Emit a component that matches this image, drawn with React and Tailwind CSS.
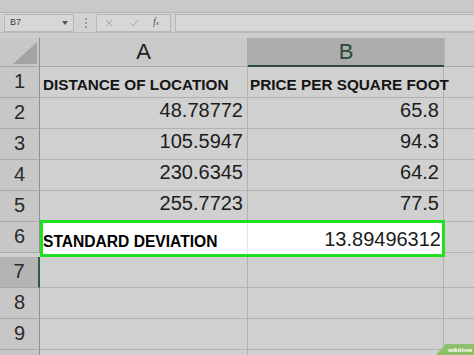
import React from "react";

const rows = [
  { n: "1", a: "DISTANCE OF LOCATION", b: "PRICE PER SQUARE FOOT", head: true },
  { n: "2", a: "48.78772", b: "65.8" },
  { n: "3", a: "105.5947", b: "94.3" },
  { n: "4", a: "230.6345", b: "64.2" },
  { n: "5", a: "255.7723", b: "77.5" },
];

function RowHeader({ n, selected }) {
  return (
    <div
      className={
        "h-[31px] flex items-end justify-center pb-[6px] text-[20px] leading-[20px] text-[#2a2a2a] border-b border-[#a9a9a9] " +
        (selected
          ? "bg-[#b4b4b4] border-r-2 border-r-[#2d5a3d]"
          : "bg-[#c7c7c7] border-r border-r-[#8f8f8f]")
      }
    >
      {n}
    </div>
  );
}

function DataRow({ r }) {
  if (r.head) {
    return (
      <>
        <RowHeader n={r.n} />
        <div className="h-[31px] flex items-end pl-[3px] pb-[5px] text-[15.3px] leading-[15px] font-bold text-[#141414] border-b border-r border-[#b2b2b2] whitespace-nowrap">
          {r.a}
        </div>
        <div className="h-[31px] flex items-end pl-[2px] pb-[5px] text-[15.3px] leading-[15px] font-bold text-[#141414] border-b border-r border-[#b2b2b2] whitespace-nowrap">
          {r.b}
        </div>
        <div className="h-[31px] border-b border-[#b2b2b2]" />
      </>
    );
  }
  return (
    <>
      <RowHeader n={r.n} />
      <div className="h-[31px] flex items-end justify-end pr-[4px] pb-[8px] text-[20px] leading-[20px] text-[#1c1c1c] border-b border-r border-[#b2b2b2]">
        {r.a}
      </div>
      <div className="h-[31px] flex items-end justify-end pr-[4px] pb-[8px] text-[20px] leading-[20px] text-[#1c1c1c] border-b border-r border-[#b2b2b2]">
        {r.b}
      </div>
      <div className="h-[31px] border-b border-[#b2b2b2]" />
    </>
  );
}

function EmptyRow({ n, selected }) {
  return (
    <>
      <RowHeader n={n} selected={selected} />
      <div className="h-[31px] border-b border-r border-[#b2b2b2]" />
      <div className="h-[31px] border-b border-r border-[#b2b2b2]" />
      <div className="h-[31px] border-b border-[#b2b2b2]" />
    </>
  );
}

export default function App() {
  return (
    <div className="relative w-[474px] h-[355px] overflow-hidden bg-[#d0d0d0] font-['Liberation_Sans',Arial,sans-serif]">
      {/* top strip */}
      <div className="h-[13px] bg-[#c9c9c9] border-b border-[#b6b6b6]" />
      {/* formula bar */}
      <div className="h-[20px] flex items-center bg-[#d2d2d2] border-b border-[#b9b9b9]">
        <div className="ml-[4px] w-[70px] h-[18px] flex items-center justify-between px-[5px] bg-[#d7d7d7] border border-[#b8b8b8]">
          <span className="text-[9px] leading-[9px] text-[#3c3c3c]">B7</span>
          <svg width="6" height="4" viewBox="0 0 6 4">
            <path d="M0 0 L6 0 L3 4 Z" fill="#555" />
          </svg>
        </div>
        <div className="ml-[11px] w-[2px] flex flex-col gap-[2px]">
          <span className="block w-[2px] h-[2px] bg-[#9a9a9a]" />
          <span className="block w-[2px] h-[2px] bg-[#9a9a9a]" />
          <span className="block w-[2px] h-[2px] bg-[#9a9a9a]" />
        </div>
        <div className="ml-[9px] w-[75px] h-[18px] flex items-center bg-[#d7d7d7] border border-[#b8b8b8]">
          <svg className="ml-[8px]" width="8" height="8" viewBox="0 0 8 8">
            <path d="M1 1 L7 7 M7 1 L1 7" stroke="#a8a8a8" strokeWidth="1" />
          </svg>
          <svg className="ml-[16px]" width="10" height="8" viewBox="0 0 10 8">
            <path d="M1 4 L4 7 L9 1" stroke="#a8a8a8" strokeWidth="1" fill="none" />
          </svg>
          <span className="ml-[14px] text-[10px] leading-[10px] italic text-[#555] font-['Liberation_Serif',serif]">
            f<span className="text-[7px]">x</span>
          </span>
        </div>
        <div className="ml-[4px] flex-1 h-[18px] bg-[#d7d7d7] border border-r-0 border-[#b8b8b8]" />
      </div>
      <div className="h-[5px] bg-[#cdcdcd]" />

      {/* grid */}
      <div className="grid grid-cols-[40px_208px_196px_1fr]">
        {/* header row */}
        <div className="h-[29px] relative bg-[#c7c7c7] border-r border-[#8f8f8f] border-b border-b-[#a9a9a9]">
          <svg className="absolute left-[13px] top-[4px]" width="24" height="22" viewBox="0 0 24 22">
            <path d="M24 0 L24 22 L0 22 Z" fill="#a3a3a3" />
          </svg>
        </div>
        <div className="h-[29px] flex items-center justify-center bg-[#c9c9c9] border-r border-b border-[#a9a9a9] text-[22px] leading-[22px] text-[#1e1e1e]">
          A
        </div>
        <div className="h-[29px] flex items-center justify-center bg-[#acacac] border-b-2 border-[#2b4a38] text-[22px] leading-[22px] text-[#2b4a38]">
          B
        </div>
        <div className="h-[29px] bg-[#cbcbcb] border-b border-[#a9a9a9] border-l border-l-[#b8b8b8]" />

        {rows.map((r) => (
          <DataRow key={r.n} r={r} />
        ))}

        {/* row 6 */}
        <RowHeader n="6" />
        <div className="col-span-2 h-[31px] -mt-[2px] -mr-[1px] box-content border-[3px] border-[#21e021] bg-white grid grid-cols-[205px_1fr] relative z-10">
          <div className="flex items-end pb-[5px] text-[15.6px] leading-[15px] font-bold text-black whitespace-nowrap border-r border-[#e4e4e4]">
            STANDARD DEVIATION
          </div>
          <div className="flex items-end justify-end pr-[1px] pb-[5px] text-[20px] leading-[20px] text-[#1c1c1c]">
            13.89496312
          </div>
        </div>
        <div className="h-[31px] border-b border-[#b2b2b2]" />

        <EmptyRow n="7" selected />
        <EmptyRow n="8" />
        <EmptyRow n="9" />
        <EmptyRow n="10" />
      </div>

      {/* watermark */}
      <div className="absolute right-0 bottom-0 w-[38px] h-[11px] bg-[#8fbf6a] [clip-path:polygon(25%_0,100%_0,100%_100%,0_100%)] flex items-center justify-end pr-[2px]">
        <span className="text-[6px] leading-[6px] font-bold text-white">wikiHow</span>
      </div>
    </div>
  );
}
